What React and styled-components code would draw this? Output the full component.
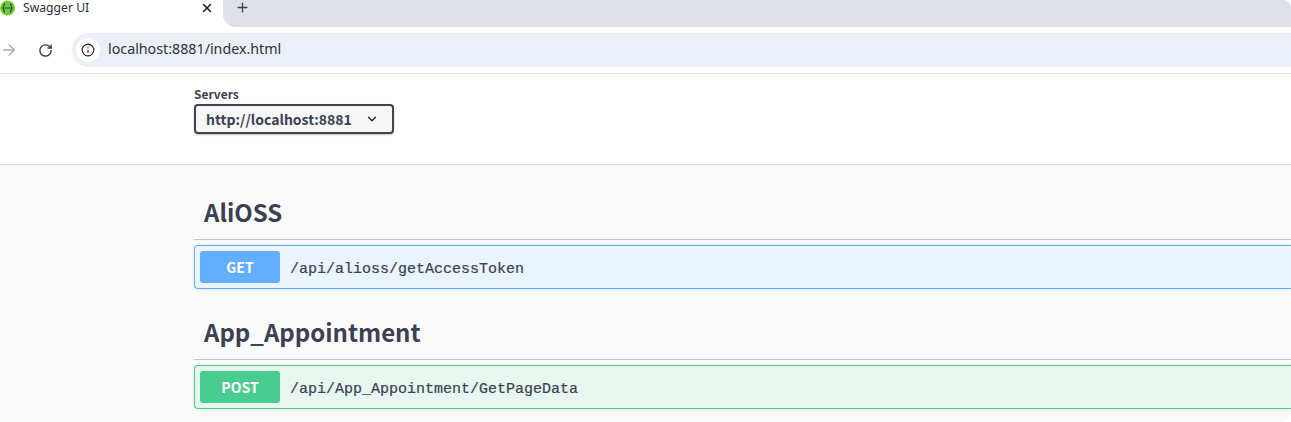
import styled, { createGlobalStyle } from "styled-components";
import { ArrowRight, ChevronDown, Info, Plus, RotateCw, X } from "lucide-react";

const GlobalStyle = createGlobalStyle`
    html, body {
        margin: 0;
        padding: 0;
        background: #fff;
    }
    * {
        box-sizing: border-box;
    }
`;

const Window = styled.div`
    width: 1291px;
    height: 422px;
    overflow: hidden;
    background: #fff;
    border-radius: 0 0 10px 0;
    display: flex;
    flex-direction: column;
`;

const TabStrip = styled.div`
    height: 27px;
    display: flex;
    flex-shrink: 0;
`;

const Tab = styled.div`
    width: 223px;
    display: flex;
    align-items: center;
    padding-bottom: 12px;
    .close {
        margin-left: 99px;
        color: #1f1f1f;
    }
`;

const TabTitle = styled.span`
    font-family: "Noto Sans", "Liberation Sans", sans-serif;
    font-size: 12.2px;
    color: #2b2f33;
    margin-left: 7px;
    width: 78px;
`;

const TabRest = styled.div`
    flex: 1;
    background: #dee1e8;
    border-radius: 0 8px 0 13px;
    padding: 0 0 12px 12px;
    display: flex;
    align-items: center;
    color: #3f4449;
`;

const Toolbar = styled.div`
    height: 47px;
    flex-shrink: 0;
    display: flex;
    align-items: flex-start;
    padding-top: 6px;
    border-bottom: 1px solid #e2e2e2;
`;

const NavIcons = styled.div`
    width: 72px;
    height: 34px;
    display: flex;
    align-items: center;
    gap: 20px;
`;

const AddressBar = styled.div`
    flex: 1;
    height: 34px;
    background: #ebeff8;
    border-radius: 17px 0 0 17px;
    padding-left: 4px;
    display: flex;
    align-items: center;
`;

const InfoBadge = styled.div`
    width: 24px;
    height: 24px;
    border-radius: 50%;
    background: #fff;
    display: flex;
    align-items: center;
    justify-content: center;
    color: #26292c;
`;

const Url = styled.span`
    font-family: "Noto Sans", "Liberation Sans", sans-serif;
    font-size: 14.25px;
    line-height: 20px;
    color: #2f3338;
    margin: 0 0 2px 8px;
`;

const ServersSection = styled.section`
    height: 91px;
    flex-shrink: 0;
    padding: 11px 0 0 194px;
    border-bottom: 1px solid #e0e0e0;
    box-shadow: 0 1px 2px rgba(0, 0, 0, .05);
    position: relative;
`;

const ServersLabel = styled.div`
    font-family: "Noto Sans CJK SC", "Noto Sans", sans-serif;
    font-size: 12px;
    font-weight: 700;
    line-height: 17px;
    color: #3b4151;
`;

const ServerSelect = styled.div`
    width: 200px;
    height: 30px;
    margin-top: 2px;
    padding: 0 13px 0 10px;
    display: flex;
    align-items: center;
    justify-content: space-between;
    border: 2px solid #41444e;
    border-radius: 4px;
    background: #f7f7f7;
    box-shadow: 0 1px 2px rgba(0, 0, 0, .25);
    font-family: "Noto Sans CJK SC", "Noto Sans", sans-serif;
    font-size: 14px;
    font-weight: 700;
    color: #3b4151;
`;

const Operations = styled.main`
    flex: 1;
    background: #fafafa;
    padding-left: 194px;
`;

const TagGroup = styled.div`
    padding-top: 28px;
    & + & {
        padding-top: 24px;
    }
`;

const TagTitle = styled.h3`
    margin: 0;
    height: 47px;
    padding: 0 0 0 10px;
    border-bottom: 1px solid #c4c4c4;
    font-family: "Noto Sans CJK SC", "Noto Sans", sans-serif;
    font-size: 24px;
    font-weight: 700;
    line-height: 38px;
    color: #3b4151;
`;

const colors = {
    GET: { main: "#61affe", soft: "#ebf3fb" },
    POST: { main: "#49cc90", soft: "#e7f6ef" },
};

const OpRow = styled.div`
    height: 44px;
    margin-top: 5px;
    padding-left: 5px;
    display: flex;
    align-items: center;
    border: 1px solid ${(p) => colors[p.$method].main};
    border-right: none;
    border-radius: 4px 0 0 4px;
    background: ${(p) => colors[p.$method].soft};
    box-shadow: 0 0 3px rgba(0, 0, 0, .12);
`;

const MethodBadge = styled.span`
    width: 80px;
    height: 32px;
    display: flex;
    align-items: center;
    justify-content: center;
    border-radius: 3px;
    background: ${(p) => colors[p.$method].main};
    font-family: "Noto Sans CJK SC", "Noto Sans", sans-serif;
    font-size: 14px;
    font-weight: 700;
    color: #fff;
`;

const OpPath = styled.span`
    margin-left: 10px;
    padding-top: 4px;
    font-family: "Liberation Mono", monospace;
    font-size: 15px;
    color: #3b4151;
    -webkit-text-stroke: 0.2px #3b4151;
`;

const Favicon = () => (
    <svg width="16" height="16" viewBox="0 0 16 16" style={{ flexShrink: 0 }}>
        <circle cx="7.5" cy="8" r="7.5" fill="#6fd326" />
        <circle cx="7.5" cy="8" r="5.8" fill="#74c34e" />
        <path d="M5 3.6C3.4 4 4.5 7.2 2.7 8c1.8.8.7 4 2.3 4.4M10 3.6c1.6.4.5 3.6 2.3 4.4-1.8.8-.7 4-2.3 4.4M4.5 8h6" fill="none" stroke="#1e4a22" strokeWidth="1.1" />
    </svg>
);

const App = () => {
    const groups = [
        { tag: "AliOSS", method: "GET", path: "/api/alioss/getAccessToken" },
        { tag: "App_Appointment", method: "POST", path: "/api/App_Appointment/GetPageData" },
    ];

    return (
        <Window>
            <GlobalStyle />
            <TabStrip>
                <Tab>
                    <Favicon />
                    <TabTitle>Swagger UI</TabTitle>
                    <X className="close" size={14} strokeWidth={2.6} />
                </Tab>
                <TabRest>
                    <Plus size={15} strokeWidth={2.2} />
                </TabRest>
            </TabStrip>
            <Toolbar>
                <NavIcons>
                    <ArrowRight size={18} color="#a9abad" strokeWidth={1.8} />
                    <RotateCw size={15} color="#3c3f43" strokeWidth={2.2} />
                </NavIcons>
                <AddressBar>
                    <InfoBadge>
                        <Info size={14} strokeWidth={2} />
                    </InfoBadge>
                    <Url>localhost:8881/index.html</Url>
                </AddressBar>
            </Toolbar>
            <ServersSection>
                <ServersLabel>Servers</ServersLabel>
                <ServerSelect>
                    http://localhost:8881
                    <ChevronDown size={14} strokeWidth={2.4} color="#1f2328" />
                </ServerSelect>
            </ServersSection>
            <Operations>
                {groups.map(({ tag, method, path }) => (
                    <TagGroup key={tag}>
                        <TagTitle>{tag}</TagTitle>
                        <OpRow $method={method}>
                            <MethodBadge $method={method}>{method}</MethodBadge>
                            <OpPath>{path}</OpPath>
                        </OpRow>
                    </TagGroup>
                ))}
            </Operations>
        </Window>
    );
};

export default App;
